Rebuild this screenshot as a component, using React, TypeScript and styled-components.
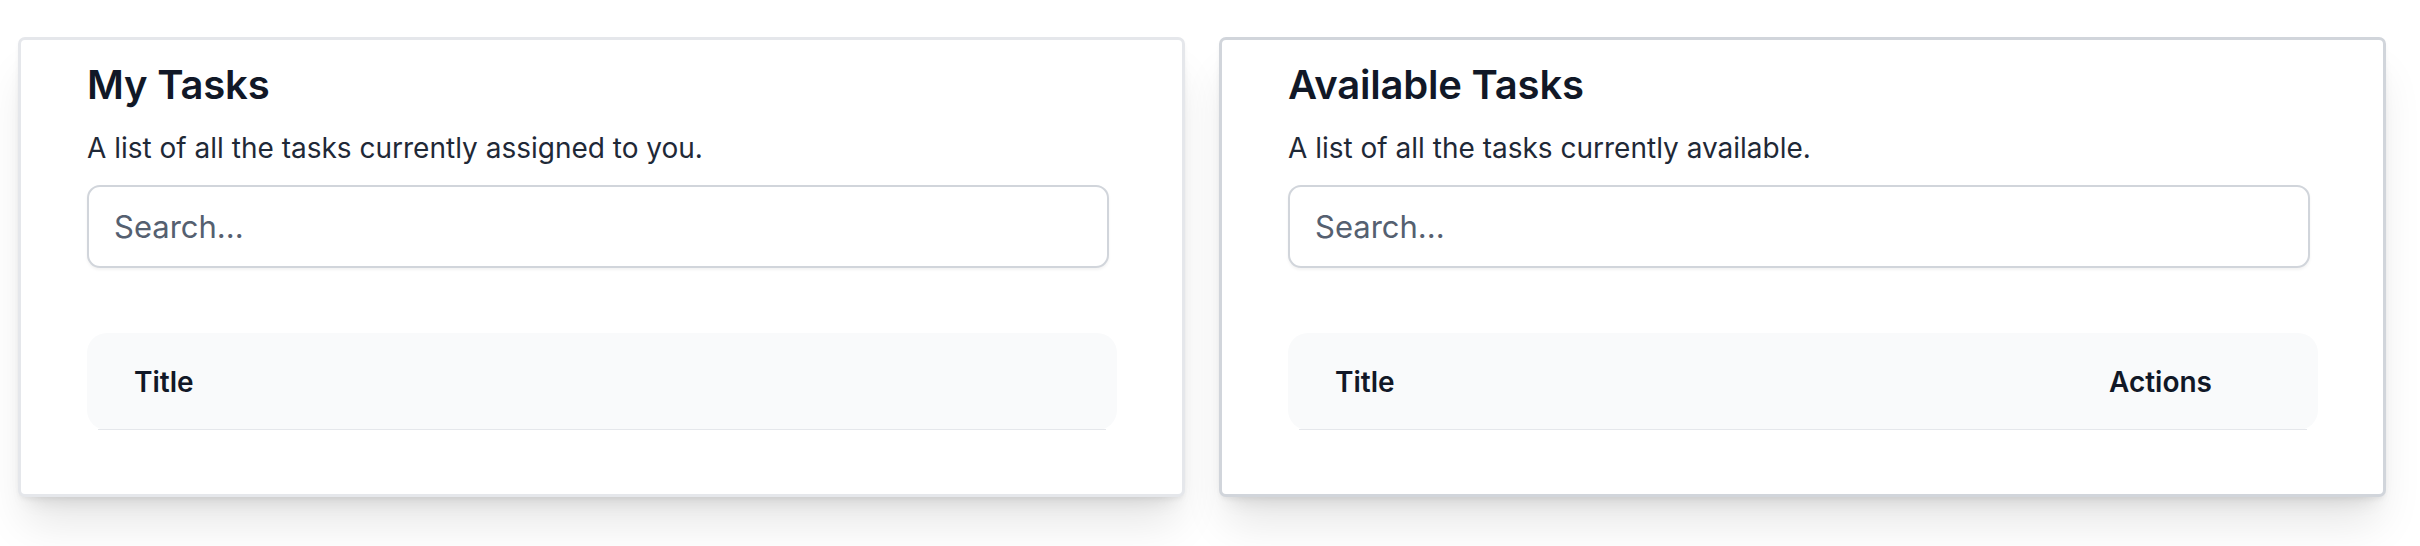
import React from "react";
import styled, { createGlobalStyle } from "styled-components";

const GlobalStyle = createGlobalStyle`
  html, body {
    margin: 0;
    padding: 0;
    background: #ffffff;
    font-family: Inter, "Noto Sans", sans-serif;
  }
  * { box-sizing: border-box; }
`;

const Page = styled.div`
  display: flex;
  align-items: flex-start;
  gap: 34px;
  min-height: 546px;
  padding: 37px 33px 48px 18px;
`;

const Card = styled.section<{ $strong?: boolean }>`
  width: 1167px;
  flex: none;
  background: #ffffff;
  border: 3px solid ${(p) => (p.$strong ? "#d1d5db" : "#e5e7eb")};
  border-radius: 7px;
  padding: 21px 65px 64px 66px;
  box-shadow: 0 33px 42px -8px rgba(0, 0, 0, 0.1),
    0 13px 17px -10px rgba(0, 0, 0, 0.1),
    0 3px 5px -1px rgba(0, 0, 0, 0.06);
  display: flex;
  flex-direction: column;
`;

const Heading = styled.h2`
  margin: 0;
  font-size: 40px;
  line-height: 48px;
  font-weight: 600;
  color: #111827;
  letter-spacing: -0.2px;
`;

const Description = styled.p`
  margin: 22px 0 0;
  font-size: 28px;
  line-height: 34px;
  color: #1f2937;
`;

const SearchInput = styled.input`
  margin: 20px 8px 0 0;
  height: 83px;
  border: 2px solid #d1d5db;
  border-radius: 13px;
  padding: 0 25px;
  font-family: Inter, "Noto Sans", sans-serif;
  font-size: 31px;
  color: #111827;
  background: #ffffff;
  box-shadow: 0 2px 3px rgba(0, 0, 0, 0.05);
  outline: none;
  &::placeholder {
    color: #556070;
  }
`;

const TableHead = styled.div`
  position: relative;
  margin-top: 65px;
  height: 97px;
  background: #f9fafb;
  border-radius: 20px;
  display: flex;
  align-items: center;
  padding: 0 106px 0 47px;
  &::after {
    content: "";
    position: absolute;
    left: 11px;
    right: 11px;
    bottom: 0;
    height: 1.5px;
    background: #e5e7eb;
  }
`;

const HeadCell = styled.div<{ $grow?: boolean }>`
  flex: ${(p) => (p.$grow ? "1" : "none")};
  font-size: 28px;
  font-weight: 600;
  color: #111827;
`;

type PanelProps = {
  title: string;
  description: string;
  strong?: boolean;
  actions?: boolean;
};

function TaskPanel({ title, description, strong, actions }: PanelProps) {
  return (
    <Card $strong={strong}>
      <Heading>{title}</Heading>
      <Description>{description}</Description>
      <SearchInput type="text" placeholder="Search..." />
      <TableHead>
        <HeadCell $grow>Title</HeadCell>
        {actions && <HeadCell>Actions</HeadCell>}
      </TableHead>
    </Card>
  );
}

export default function App() {
  return (
    <>
      <GlobalStyle />
      <Page>
        <TaskPanel
          title="My Tasks"
          description="A list of all the tasks currently assigned to you."
        />
        <TaskPanel
          title="Available Tasks"
          description="A list of all the tasks currently available."
          strong
          actions
        />
      </Page>
    </>
  );
}
